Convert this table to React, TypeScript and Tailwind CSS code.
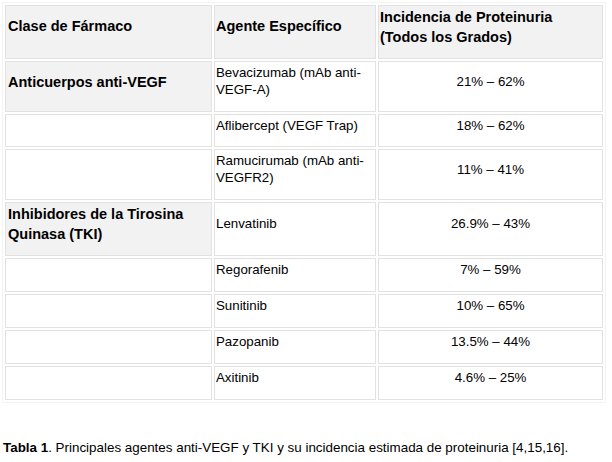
import React from "react";

const font = { fontFamily: '"Liberation Sans", Arial, sans-serif' };

type Row = {
  h: string;
  c1: React.ReactNode;
  c1bold?: boolean;
  c2: React.ReactNode;
  c3: string;
};

const rows: Row[] = [
  { h: "h-[51px]", c1: "Anticuerpos anti-VEGF", c1bold: true, c2: <>Bevacizumab (mAb anti-<br />VEGF-A)</>, c3: "21% – 62%" },
  { h: "h-[33px]", c1: "", c2: "Aflibercept (VEGF Trap)", c3: "18% – 62%" },
  { h: "h-[51px]", c1: "", c2: <>Ramucirumab (mAb anti-<br />VEGFR2)</>, c3: "11% – 41%" },
  { h: "h-[54px]", c1: <>Inhibidores de la Tirosina<br />Quinasa (TKI)</>, c1bold: true, c2: "Lenvatinib", c3: "26.9% – 43%" },
  { h: "h-[34px]", c1: "", c2: "Regorafenib", c3: "7% – 59%" },
  { h: "h-[34px]", c1: "", c2: "Sunitinib", c3: "10% – 65%" },
  { h: "h-[34px]", c1: "", c2: "Pazopanib", c3: "13.5% – 44%" },
  { h: "h-[34px]", c1: "", c2: "Axitinib", c3: "4.6% – 25%" },
];

export default function App() {
  return (
    <div className="w-[612px] h-[462px] bg-white text-black pl-[2px] pt-[2px]" style={font}>
      <table className="table-fixed border-separate border-spacing-[2px] border border-[#f3f3f3] w-[604px]">
        <colgroup>
          <col className="w-[207px]" />
          <col className="w-[162px]" />
          <col className="w-[225px]" />
        </colgroup>
        <thead>
          <tr className="h-[54px]">
            <th className="border border-[#e2e2e2] bg-[#f2f2f2] text-left align-middle font-bold text-[14.5px] leading-[20px] pl-[2px] pt-0 pb-[12px]">
              Clase de Fármaco
            </th>
            <th className="border border-[#e2e2e2] bg-[#f2f2f2] text-left align-middle font-bold text-[14.5px] leading-[20px] pl-[1px] pt-0 pb-[12px]">
              Agente Específico
            </th>
            <th className="border border-[#e2e2e2] bg-[#f2f2f2] text-left align-middle font-bold text-[14.5px] leading-[20px] pl-[1px] pt-0 pb-[10px]">
              Incidencia de Proteinuria<br />(Todos los Grados)
            </th>
          </tr>
        </thead>
        <tbody>
          {rows.map((r, i) => (
            <tr key={i} className={r.h}>
              <td
                className={
                  r.c1bold
                    ? "border border-[#e2e2e2] bg-[#f2f2f2] align-middle font-bold text-[14.5px] leading-[20px] pl-[2px] pt-0 pb-[10px]"
                    : "border border-[#e2e2e2] bg-white align-middle pl-[2px]"
                }
              >
                {r.c1}
              </td>
              <td className="border border-[#e2e2e2] bg-white align-middle text-[13.3px] leading-[17px] pl-[1px] pt-0 pb-[11px]">
                {r.c2}
              </td>
              <td className="border border-[#e2e2e2] bg-white align-middle text-center text-[13.3px] leading-[17px] pt-0 pb-[11px]">
                {r.c3}
              </td>
            </tr>
          ))}
        </tbody>
      </table>
      <p className="mt-[36px] pl-[1px] text-[13.4px] leading-[17px] whitespace-nowrap">
        <span className="font-bold">Tabla 1</span>. Principales agentes anti-VEGF y TKI y su incidencia estimada de proteinuria [4,15,16].
      </p>
    </div>
  );
}
